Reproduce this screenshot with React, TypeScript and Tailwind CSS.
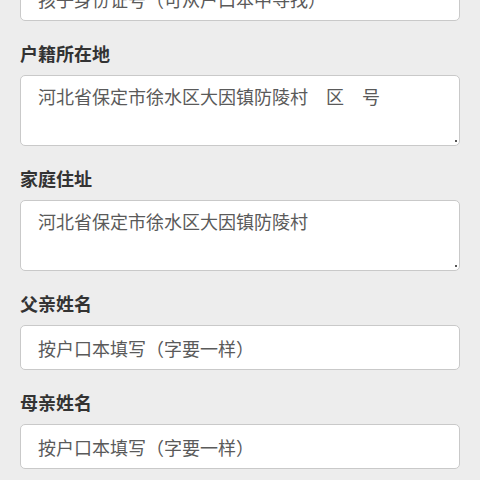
const fields = [
  { label: '户籍所在地', value: '河北省保定市徐水区大因镇防陵村\u3000区\u3000号', multiline: true },
  { label: '家庭住址', value: '河北省保定市徐水区大因镇防陵村', multiline: true },
  { label: '父亲姓名', value: '按户口本填写（字要一样）', multiline: false },
  { label: '母亲姓名', value: '按户口本填写（字要一样）', multiline: false },
]

const boxClass =
  'block w-full rounded-[5px] border border-[#c9c9c9] bg-white pl-[17px] pr-3 text-[18px] text-[#5a5a5a] outline-none'

export default function App() {
  return (
    <main
      className="min-h-screen overflow-hidden bg-[#ededed] px-5"
      style={{ fontFamily: '"Noto Sans CJK SC", "Noto Sans", sans-serif' }}
    >
      <div className="-mt-[24px]">
        <input
          readOnly
          value="孩子身份证号（可从户口本中寻找）"
          className={`${boxClass} h-[45px] leading-[24px]`}
        />
      </div>

      {fields.map((field) => (
        <section key={field.label} className="mt-[20px]">
          <h2 className="text-[18px] font-bold leading-[24px] text-[#333]">{field.label}</h2>
          {field.multiline ? (
            <div className="relative mt-[10px]">
              <textarea
                readOnly
                value={field.value}
                className={`${boxClass} h-[71px] resize-none pt-[8px] leading-[24px]`}
              />
              {/* tiny resize grip */}
              <span className="absolute bottom-[4px] right-[3px] h-[2px] w-[2px] bg-[#555]" />
            </div>
          ) : (
            <input
              readOnly
              value={field.value}
              className={`${boxClass} mt-[10px] h-[45px] leading-[24px]`}
            />
          )}
        </section>
      ))}
    </main>
  )
}
